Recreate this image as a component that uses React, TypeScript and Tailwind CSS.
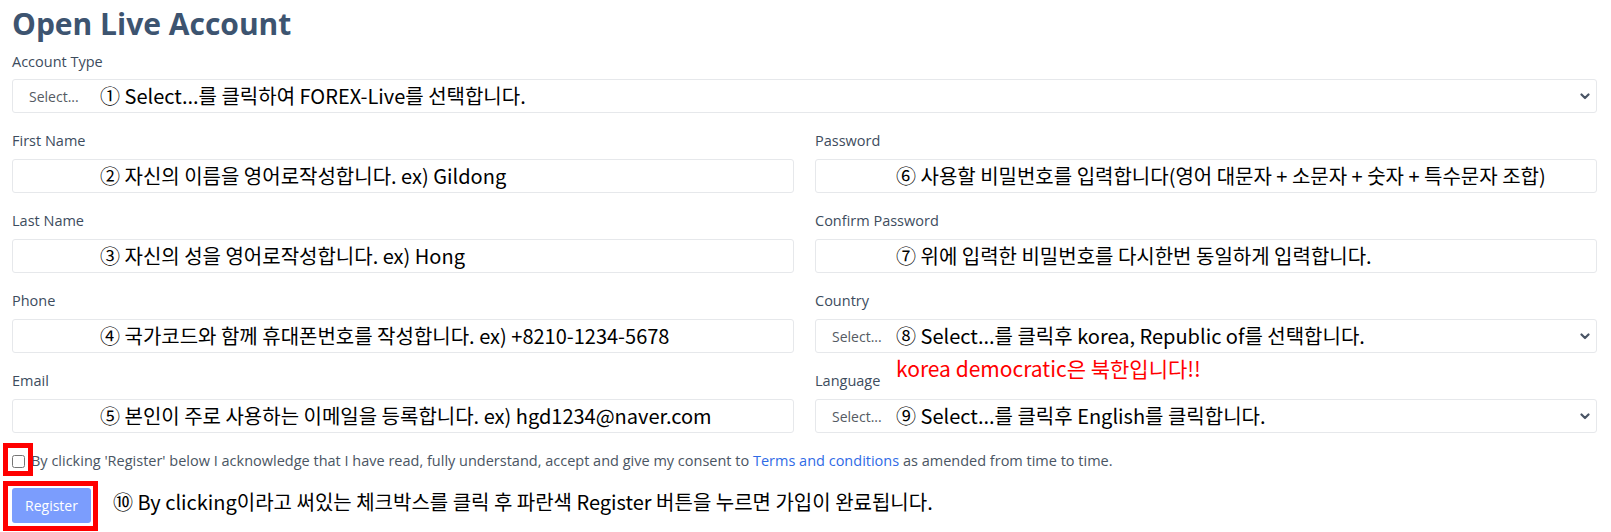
import React from 'react';

const noteFont = "font-['Noto_Sans_CJK_KR','Noto_Sans',sans-serif]";

function Chevron() {
  return (
    <svg className="w-[10px] h-[7px] text-[#4a5565]" viewBox="0 0 10 7" fill="none" stroke="currentColor" strokeWidth={2.2}>
      <path d="M1.5 1.5 5 5l3.5-3.5" strokeLinecap="round" strokeLinejoin="round" />
    </svg>
  );
}

function Label({ children }: { children: React.ReactNode }) {
  return <div className="text-[14.5px] leading-5 text-[#3d4c5e] mb-2">{children}</div>;
}

function TextBox({ note, indent }: { note: string; indent: string }) {
  return (
    <div className={`h-[34px] border border-[#e6e8eb] rounded-[3px] bg-white flex items-center ${indent}`}>
      <span className={`${noteFont} text-[20px] text-black whitespace-nowrap`}>{note}</span>
    </div>
  );
}

function SelectBox({ note, noteAt }: { note: string; noteAt: string }) {
  return (
    <div className="h-[34px] border border-[#e6e8eb] rounded-[3px] bg-white flex items-center pl-[16px] pr-[6px]">
      <span className="text-[14px] text-[#555b63] w-[64px] shrink-0">Select...</span>
      <span className={`${noteFont} text-[20px] text-black whitespace-nowrap ${noteAt}`}>{note}</span>
      <span className="ml-auto flex items-center">
        <Chevron />
      </span>
    </div>
  );
}

export default function App() {
  return (
    <div className="min-h-[532px] bg-white pl-3 pr-[14px] font-['Open_Sans','Noto_Sans',sans-serif]">
      <h1 className="text-[30px] font-bold leading-[48px] text-[#3d5470]">Open Live Account</h1>

      {/* Account type */}
      <div className="mt-1">
        <div className="text-[14.5px] leading-5 text-[#3d4c5e] mb-[7px]">Account Type</div>
        <SelectBox note="① Select...를 클릭하여 FOREX-Live를 선택합니다." noteAt="ml-[7px]" />
      </div>

      {/* Two column fields */}
      <div className="grid grid-cols-2 gap-x-[21px] mt-[18px]">
        <div className="flex flex-col gap-[18px]">
          <div>
            <Label>First Name</Label>
            <TextBox indent="pl-[87px]" note="② 자신의 이름을 영어로작성합니다. ex) Gildong" />
          </div>
          <div>
            <Label>Last Name</Label>
            <TextBox indent="pl-[87px]" note="③ 자신의 성을 영어로작성합니다. ex) Hong" />
          </div>
          <div>
            <Label>Phone</Label>
            <TextBox indent="pl-[87px]" note="④ 국가코드와 함께 휴대폰번호를 작성합니다. ex) +8210-1234-5678" />
          </div>
          <div>
            <Label>Email</Label>
            <TextBox indent="pl-[87px]" note="⑤ 본인이 주로 사용하는 이메일을 등록합니다. ex) hgd1234@naver.com" />
          </div>
        </div>

        <div className="flex flex-col gap-[18px]">
          <div>
            <Label>Password</Label>
            <TextBox indent="pl-[80px]" note="⑥ 사용할 비밀번호를 입력합니다(영어 대문자 + 소문자 + 숫자 + 특수문자 조합)" />
          </div>
          <div>
            <Label>Confirm Password</Label>
            <TextBox indent="pl-[80px]" note="⑦ 위에 입력한 비밀번호를 다시한번 동일하게 입력합니다." />
          </div>
          <div>
            <Label>Country</Label>
            <SelectBox note="⑧ Select...를 클릭후 korea, Republic of를 선택합니다." noteAt="ml-0" />
          </div>
          <div className="relative">
            <span className={`absolute left-[81px] -top-[17px] ${noteFont} text-[21px] leading-[28px] text-[#ff0000] whitespace-nowrap`}>
              korea democratic은 북한입니다!!
            </span>
            <Label>Language</Label>
            <SelectBox note="⑨ Select...를 클릭후 English를 클릭합니다." noteAt="ml-0" />
          </div>
        </div>
      </div>

      {/* Consent */}
      <div className="mt-[18px] flex items-center h-5">
        <span className="relative flex items-center">
          <input type="checkbox" className="m-0 w-[13px] h-[13px]" />
          <span className="absolute -left-[9px] -top-[12px] w-[30px] h-[33px] border-[5px] border-[#ff0000]" />
        </span>
        <span className="ml-[6px] text-[14.5px] text-[#4a5563] whitespace-nowrap">
          By clicking 'Register' below I acknowledge that I have read, fully understand, accept and give my consent to{' '}
          <a className="text-[#2f6be6]">Terms and conditions</a> as amended from time to time.
        </span>
      </div>

      <div className="mt-[17px] flex items-center">
        <span className="relative flex">
          <button className="w-[79px] h-[35px] rounded-[3px] bg-[#7b9dfd] text-white text-[14px]">Register</button>
          <span className="absolute -left-[9px] -top-[7px] w-[95px] h-[50px] border-[5px] border-[#ff0000]" />
        </span>
        <span className={`ml-[22px] -mt-[8px] ${noteFont} text-[20px] text-black whitespace-nowrap`}>
          ⑩ By clicking이라고 써있는 체크박스를 클릭 후 파란색 Register 버튼을 누르면 가입이 완료됩니다.
        </span>
      </div>
    </div>
  );
}
